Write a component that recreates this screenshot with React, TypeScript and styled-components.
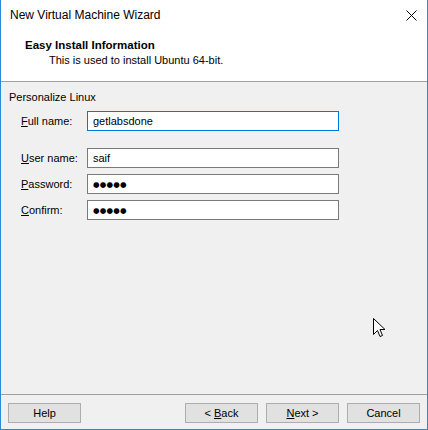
import React from 'react';
import styled, { createGlobalStyle } from 'styled-components';

const GlobalStyle = createGlobalStyle`
  html, body {
    margin: 0;
    padding: 0;
    background: #ffffff;
  }
  * {
    box-sizing: border-box;
  }
`;

const Window = styled.div`
  position: relative;
  width: 428px;
  height: 430px;
  display: flex;
  flex-direction: column;
  border: 1px solid #2b8ad6;
  border-top: none;
  background: #f0f0f0;
  font-family: 'Liberation Sans', Arial, sans-serif;
  font-size: 11px;
  color: #000;
  overflow: hidden;
`;

const TitleBar = styled.div`
  height: 31px;
  display: flex;
  align-items: center;
  justify-content: space-between;
  padding: 0 10px 1px 9px;
  background: #ffffff;
`;

const TitleText = styled.span`
  font-size: 12px;
  color: #000;
`;

const CloseButton = styled.div`
  width: 12px;
  height: 12px;
  display: flex;
  align-items: center;
  justify-content: center;
`;

const Header = styled.div`
  height: 51px;
  display: flex;
  flex-direction: column;
  padding: 7px 0 0 24px;
  background: #ffffff;
  border-bottom: 1px solid #a0a0a0;
`;

const HeaderTitle = styled.div`
  font-weight: bold;
  font-size: 11.5px;
  line-height: 15px;
`;

const HeaderSub = styled.div`
  padding-left: 24px;
  line-height: 15px;
`;

const Body = styled.div`
  flex: 1;
  padding: 8px 0 0 8px;
  display: flex;
  flex-direction: column;
`;

const GroupTitle = styled.div`
  line-height: 15px;
`;

const Form = styled.div`
  display: flex;
  flex-direction: column;
  gap: 6px;
  padding-left: 12px;
  margin-top: 6px;
`;

const Row = styled.div<{ $spaced?: boolean }>`
  display: flex;
  align-items: center;
  margin-bottom: ${p => (p.$spaced ? '11px' : '0')};
`;

const Label = styled.label`
  width: 66px;
  line-height: 15px;
`;

const Field = styled.div<{ $focused?: boolean }>`
  width: 252px;
  height: 20px;
  background: #ffffff;
  border: 1px solid ${p => (p.$focused ? '#0078d7' : '#7a7a7a')};
  display: flex;
  align-items: center;
  padding: 0 5px;
`;

const Dots = styled.span`
  font-family: 'DejaVu Sans', sans-serif;
  font-size: 7.5px;
  letter-spacing: 0.2px;
`;

const Footer = styled.div`
  border-top: 1px solid #a0a0a0;
  height: 35px;
  display: flex;
  align-items: flex-start;
  padding: 8px 7px 0 7px;
  gap: 8px;
`;

const Spacer = styled.div`
  flex: 1;
`;

const Button = styled.div`
  width: 73px;
  height: 20px;
  background: #e1e1e1;
  border: 1px solid #adadad;
  display: flex;
  align-items: center;
  justify-content: center;
  white-space: pre;
`;

const Cursor = styled.svg`
  position: absolute;
  left: 372px;
  top: 318px;
`;

export default function App() {
  return (
    <>
      <GlobalStyle />
      <Window>
        <TitleBar>
          <TitleText>New Virtual Machine Wizard</TitleText>
          <CloseButton>
            <svg width="11" height="11" viewBox="0 0 11 11">
              <path d="M0.5 0.5 L10.5 10.5 M10.5 0.5 L0.5 10.5" stroke="#000" strokeWidth="1" />
            </svg>
          </CloseButton>
        </TitleBar>
        <Header>
          <HeaderTitle>Easy Install Information</HeaderTitle>
          <HeaderSub>This is used to install Ubuntu 64-bit.</HeaderSub>
        </Header>
        <Body>
          <GroupTitle>Personalize Linux</GroupTitle>
          <Form>
            <Row $spaced>
              <Label><u>F</u>ull name:</Label>
              <Field $focused>getlabsdone</Field>
            </Row>
            <Row>
              <Label><u>U</u>ser name:</Label>
              <Field>saif</Field>
            </Row>
            <Row>
              <Label><u>P</u>assword:</Label>
              <Field><Dots>●●●●●</Dots></Field>
            </Row>
            <Row>
              <Label><u>C</u>onfirm:</Label>
              <Field><Dots>●●●●●</Dots></Field>
            </Row>
          </Form>
        </Body>
        <Footer>
          <Button>Help</Button>
          <Spacer />
          <Button><span>{'< '}<u>B</u>ack</span></Button>
          <Button><span><u>N</u>{'ext >'}</span></Button>
          <Button>Cancel</Button>
        </Footer>
        <Cursor width="13" height="20" viewBox="0 0 13 20">
          <path
            d="M0.5 0.5 L0.5 16.5 L4.5 12.5 L7 18.5 L9.5 17.5 L7 11.5 L12 11.5 Z"
            fill="#fff"
            stroke="#000"
            strokeWidth="1"
          />
        </Cursor>
      </Window>
    </>
  );
}
